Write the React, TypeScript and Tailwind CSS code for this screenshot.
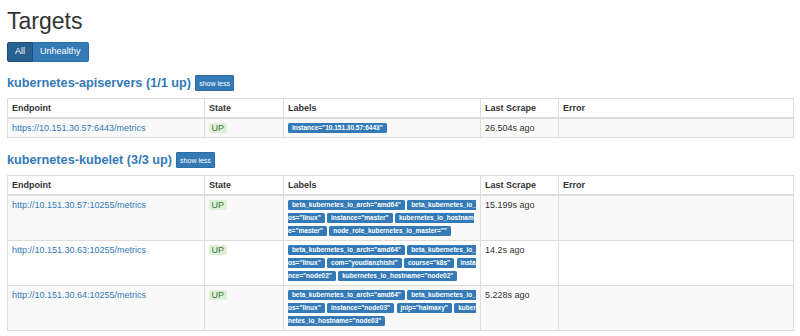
import React from "react";

type Row = { endpoint: string; labels: string[]; scrape: string };

const apiRows: Row[] = [
  {
    endpoint: "https://10.151.30.57:6443/metrics",
    labels: ['instance="10.151.30.57:6443"'],
    scrape: "26.504s ago",
  },
];

const kubeletRows: Row[] = [
  {
    endpoint: "http://10.151.30.57:10255/metrics",
    labels: [
      'beta_kubernetes_io_arch="amd64"',
      'beta_kubernetes_io_os="linux"',
      'instance="master"',
      'kubernetes_io_hostname="master"',
      'node_role_kubernetes_io_master=""',
    ],
    scrape: "15.199s ago",
  },
  {
    endpoint: "http://10.151.30.63:10255/metrics",
    labels: [
      'beta_kubernetes_io_arch="amd64"',
      'beta_kubernetes_io_os="linux"',
      'com="youdianzhishi"',
      'course="k8s"',
      'instance="node02"',
      'kubernetes_io_hostname="node02"',
    ],
    scrape: "14.2s ago",
  },
  {
    endpoint: "http://10.151.30.64:10255/metrics",
    labels: [
      'beta_kubernetes_io_arch="amd64"',
      'beta_kubernetes_io_os="linux"',
      'instance="node03"',
      'jnlp="haimaxy"',
      'kubernetes_io_hostname="node03"',
    ],
    scrape: "5.228s ago",
  },
];

function Label({ text }: { text: string }) {
  return (
    <span className="rounded-[1.5px] bg-[#337ab7] px-[0.6em] pt-[0.2em] pb-[0.3em] text-[6.5px] leading-none font-bold text-white">
      {text}
    </span>
  );
}

function Section({ title, rows }: { title: string; rows: Row[] }) {
  return (
    <div>
      <div className="flex items-center gap-[4px] h-[16px]">
        <h3 className="text-[12.7px] font-bold text-[#337ab7] leading-[16px]">{title}</h3>
        <button className="h-[16px] w-[39px] bg-[#337ab7] text-white text-[7px] leading-none rounded-[1px] border border-[#2e6da4]">
          show less
        </button>
      </div>
      <table className="mt-[7px] w-full table-fixed border-collapse border border-[#ddd] text-[9px] leading-[13px] text-[#333]">
        <colgroup>
          <col className="w-[197px]" />
          <col className="w-[79px]" />
          <col className="w-[197px]" />
          <col className="w-[78px]" />
          <col />
        </colgroup>
        <thead>
          <tr className="bg-white">
            <th className="border border-[#ddd] border-b-2 px-[4px] py-[2.5px] text-left align-bottom font-bold">Endpoint</th>
            <th className="border border-[#ddd] border-b-2 px-[4px] py-[2.5px] text-left align-bottom font-bold">State</th>
            <th className="border border-[#ddd] border-b-2 px-[4px] py-[2.5px] text-left align-bottom font-bold">Labels</th>
            <th className="border border-[#ddd] border-b-2 px-[4px] py-[2.5px] text-left align-bottom font-bold">Last Scrape</th>
            <th className="border border-[#ddd] border-b-2 px-[4px] py-[2.5px] text-left align-bottom font-bold">Error</th>
          </tr>
        </thead>
        <tbody>
          {rows.map((r, i) => (
            <tr key={r.endpoint} className={i % 2 === 0 ? "bg-[#f9f9f9]" : "bg-white"}>
              <td className="border border-[#ddd] px-[4px] py-[2.5px] align-top">
                <a className="text-[#337ab7]" href="#">
                  {r.endpoint}
                </a>
              </td>
              <td className="border border-[#ddd] px-[4px] py-[2.5px] align-top">
                <span className="rounded-[2px] bg-[#dff0d8] px-[2.5px] text-[#3c763d]">UP</span>
              </td>
              <td className="border border-[#ddd] px-[4px] py-[2.5px] align-top break-all">
                {r.labels.map((l, j) => (
                  <React.Fragment key={l}>
                    {j > 0 ? " " : null}
                    <Label text={l} />
                  </React.Fragment>
                ))}
              </td>
              <td className="border border-[#ddd] px-[4px] py-[2.5px] align-top">{r.scrape}</td>
              <td className="border border-[#ddd] px-[4px] py-[2.5px] align-top"></td>
            </tr>
          ))}
        </tbody>
      </table>
    </div>
  );
}

export default function App() {
  return (
    <div
      className="w-[800px] h-[336px] overflow-hidden bg-white pl-[7px] pr-[6px] text-[#333]"
      style={{ fontFamily: '"Liberation Sans", Arial, Helvetica, sans-serif' }}
    >
      <h2 className="pt-[9px] text-[23px] leading-[25px] font-normal text-[#333]">Targets</h2>
      <div className="mt-[8px] flex">
        <button className="h-[20px] px-[7px] bg-[#286090] text-white text-[9px] rounded-l-[2px] border border-[#204d74]">
          All
        </button>
        <button className="h-[20px] px-[7px] bg-[#337ab7] text-white text-[9px] rounded-r-[2px] border border-[#2e6da4] border-l-0">
          Unhealthy
        </button>
      </div>
      <div className="mt-[13px]">
        <Section title="kubernetes-apiservers (1/1 up)" rows={apiRows} />
      </div>
      <div className="mt-[14px]">
        <Section title="kubernetes-kubelet (3/3 up)" rows={kubeletRows} />
      </div>
    </div>
  );
}
